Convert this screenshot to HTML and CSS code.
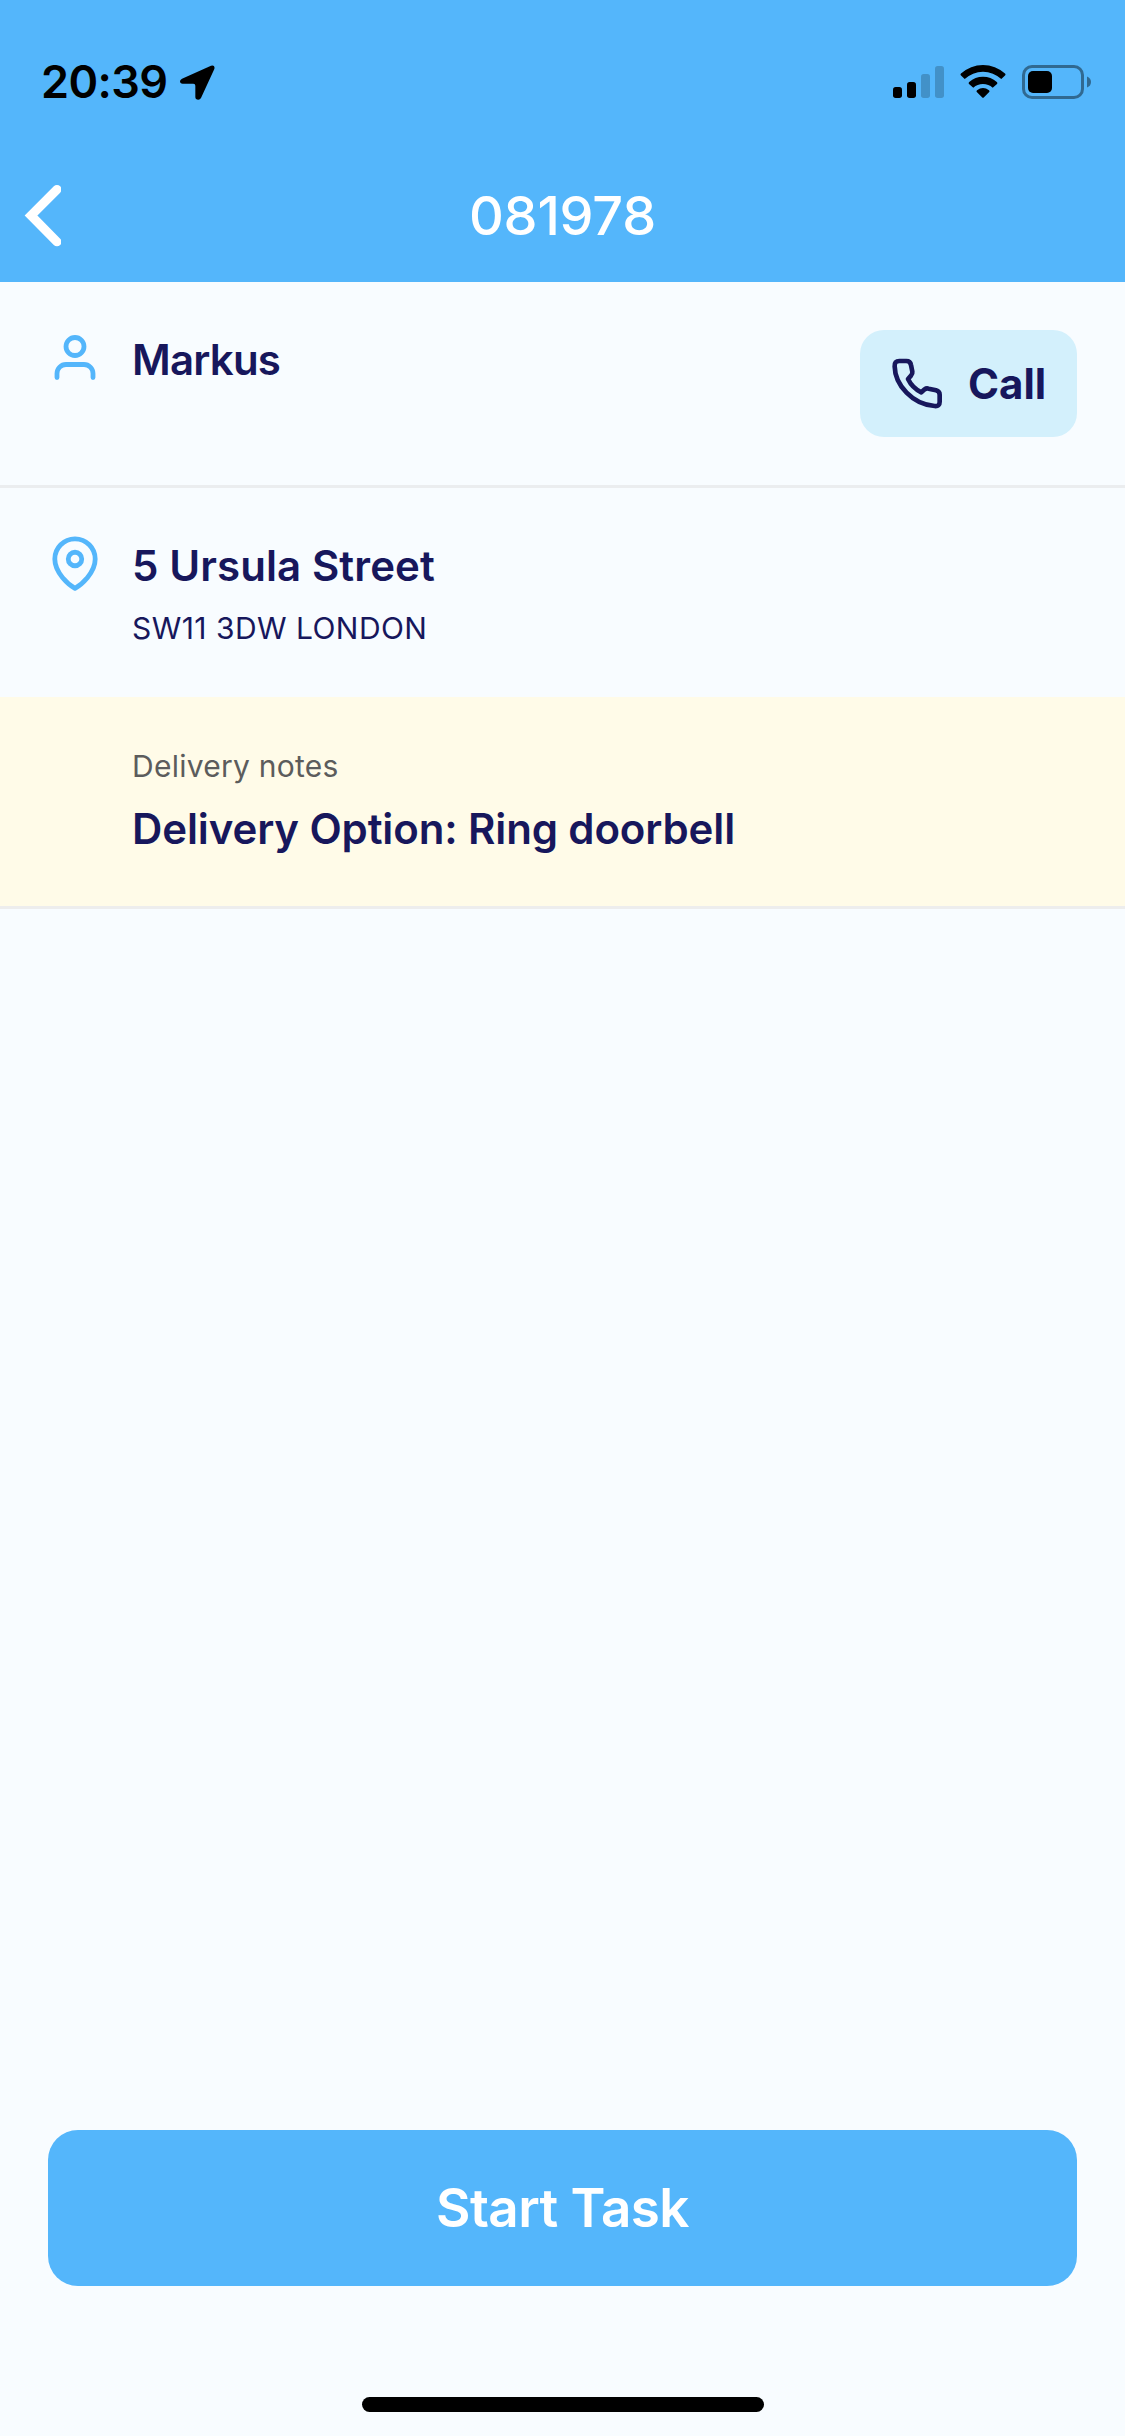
FILE: index.html
```html
<!DOCTYPE html>
<html lang="en">
<head>
<meta charset="utf-8">
<title>Task 081978</title>
<link rel="stylesheet" href="styles.css">
</head>
<body>
<div class="screen">
  <header class="header">
    <div class="status-bar">
      <span class="time">20:39</span>
      <svg class="location" viewBox="540 76 105 105"><path d="M633 78Q646 75 643 88L603 175Q600 180 595 180Q586 180 586 172V138Q586 132 580 132H548Q540 132 540 125Q540 120 546 117Z"/></svg>
      <svg class="indicators" viewBox="890 60 204 44">
        <rect x="893" y="87" width="9" height="11" rx="2.7"/>
        <rect x="907" y="82" width="9" height="16" rx="2.7"/>
        <g opacity=".2">
          <rect x="921" y="74" width="9" height="24" rx="2.7"/>
          <rect x="935" y="66" width="9" height="32" rx="2.7"/>
        </g>
        <path d="M961 73.6A32.5 32.5 0 0 1 1005 73.6Q1006 74.6 1005 75.5L1001.300 79.100A26.500 26.500 0 0 0 964.700 79.100L961 75.500Q960 74.600 961 73.600Z"/>
        <path d="M969.200 82A20.500 20.500 0 0 1 996.800 82Q998 83 997 84L992.700 87.800A14.500 14.500 0 0 0 973.300 87.800L969 84Q968 83 969.200 82Z"/>
        <path d="M977 90.300A10 10 0 0 1 989 90.300Q990 91.300 989.200 92L984 97.300Q983 98.300 982 97.300L976.800 92Q976 91.300 977 90.300Z"/>
        <g opacity=".42">
          <rect x="1023.500" y="66.500" width="59" height="31" rx="8.500" fill="none" stroke="#000" stroke-width="3"/>
          <path d="M1087 76.500Q1091 78 1091 82Q1091 86 1087 87.500Z"/>
        </g>
        <rect x="1028" y="71" width="24" height="22" rx="5"/>
      </svg>
    </div>
    <nav class="nav">
      <svg class="back" viewBox="72 432 111 192"><path d="M171 448.500L93 526.500L171 605.500"/></svg>
      <h1 class="title">081978</h1>
    </nav>
  </header>

  <main class="content">
    <section class="row customer">
      <svg class="icon" viewBox="0 0 54 60"><circle cx="27" cy="16.500" r="9"/><path d="M9 47.500V43.500a9 9 0 0 1 9-9h18a9 9 0 0 1 9 9v4"/></svg>
      <div class="details"><p class="primary name">Markus</p></div>
      <button class="call">
        <svg class="phone" viewBox="153 144 153 153"><path d="M178 153H199Q211 153 213 165L217 185Q218 192 213 197L204 207Q217 234 244 247L254 238Q259 234 266 236L288 241Q299 244 299 254V275Q299 290 284 288C218 284 165 225 164 169Q163 153 178 153Z"/></svg>
        <span class="call-label">Call</span>
      </button>
    </section>
    <section class="row address">
      <svg class="icon" viewBox="0 0 54 60"><circle cx="27" cy="23" r="6.750"/><path d="M27 52.300C21 49 6.800 37 6.800 23a20.200 20.200 0 0 1 40.400 0C47.200 37 33 49 27 52.300Z"/></svg>
      <div class="details">
        <p class="primary street">5 Ursula Street</p>
        <p class="secondary city">SW11 3DW LONDON</p>
      </div>
    </section>
    <section class="notes">
      <p class="secondary notes-label">Delivery notes</p>
      <p class="primary notes-text">Delivery Option: Ring doorbell</p>
    </section>
  </main>

  <footer class="footer">
    <button class="start"><span class="start-label">Start Task</span></button>
    <div class="home-indicator"></div>
  </footer>
</div>
</body>
</html>
```
FILE: styles.css
```css
* {
  box-sizing: border-box;
}

body,
h1,
p {
  margin: 0;
}

body {
  font-family: Inter, "Liberation Sans", sans-serif;
  background: #f8fcff;
  color: #17175c;
}

svg {
  display: block;
  flex: none;
}

button {
  border: 0;
  padding: 0;
  font: inherit;
  color: inherit;
}

.screen {
  display: flex;
  flex-direction: column;
  height: 2436px;
}

.header {
  height: 282px;
  background: #54b6fb;
}

.status-bar {
  display: flex;
  align-items: center;
  height: 150px;
  padding: 14px 31px 0 41px;
  color: #000;
}

.time {
  width: 139px;
  font-size: 45px;
  font-weight: 600;
  line-height: 54px;
  letter-spacing: -0.6px;
}

.location {
  width: 35px;
  height: 35px;
}

.indicators {
  width: 204px;
  height: 44px;
  margin-left: auto;
}

.nav {
  display: grid;
  grid-template-columns: 38px 1fr 38px;
  align-items: center;
  height: 132px;
  padding: 0 24px;
}

.back {
  width: 37px;
  height: 64px;
  fill: none;
  stroke: #fff;
  stroke-width: 27;
  stroke-linecap: round;
}

.title {
  font-size: 54px;
  font-weight: 450;
  line-height: 64px;
  letter-spacing: -0.2px;
  text-align: center;
  color: #fff;
}

.content {
  flex: 1;
}

.row {
  display: flex;
  align-items: flex-start;
  padding: 48px 48px 0;
}

.customer {
  height: 206px;
  border-bottom: 3px solid #ebedef;
}

.address {
  height: 209px;
}

.icon {
  width: 54px;
  height: 60px;
  margin-right: 30px;
  fill: none;
  stroke: #54b6fb;
  stroke-width: 4.8;
  stroke-linecap: round;
  stroke-linejoin: round;
}

.details {
  flex: 1;
}

.primary {
  font-size: 42px;
  font-weight: 600;
  line-height: 60px;
}

.name {
  letter-spacing: -0.8px;
}

.street {
  letter-spacing: 0.1px;
}

.secondary {
  font-size: 30px;
  line-height: 44px;
}

.city {
  margin-top: 10px;
  letter-spacing: 0.45px;
}

.call {
  display: flex;
  align-items: center;
  gap: 26px;
  width: 217px;
  height: 107px;
  padding-left: 31px;
  border-radius: 24px;
  background: #d3f0fc;
}

.phone {
  width: 51px;
  height: 51px;
  fill: none;
  stroke: #17175c;
  stroke-width: 14;
  stroke-linejoin: round;
}

.call-label {
  font-size: 42px;
  font-weight: 700;
  line-height: 60px;
}

.notes {
  height: 212px;
  padding: 47px 48px 0 132px;
  border-bottom: 3px solid #ededed;
  background: #fffbe8;
}

.notes-label {
  margin-bottom: 11px;
  letter-spacing: 0.25px;
  color: #5c5c5c;
}

.notes-text {
  letter-spacing: -0.12px;
}

.footer {
  display: flex;
  flex-direction: column;
  align-items: center;
  height: 306px;
  padding: 0 48px;
}

.start {
  width: 100%;
  height: 156px;
  border-radius: 30px;
  background: #54b6fb;
  color: #fff;
}

.start-label {
  font-size: 53px;
  font-weight: 600;
  line-height: 64px;
  letter-spacing: -0.6px;
}

.home-indicator {
  width: 402px;
  height: 15px;
  margin-top: 111px;
  border-radius: 8px;
  background: #000;
}
```
